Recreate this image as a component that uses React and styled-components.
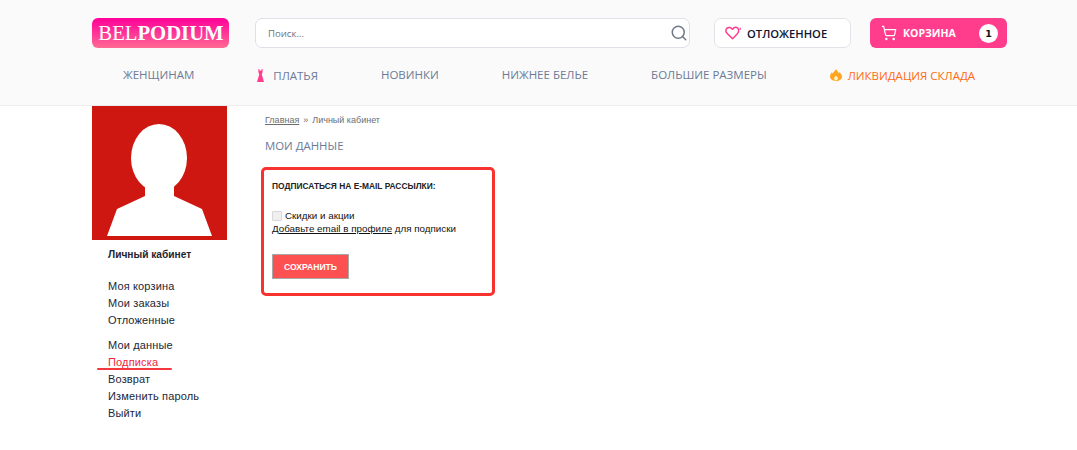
import React from "react";
import styled, { createGlobalStyle } from "styled-components";
import { Search, ShoppingCart } from "lucide-react";

const Global = createGlobalStyle`
  html, body { margin: 0; padding: 0; background: #fff; }
  * { box-sizing: border-box; }
`;

const Page = styled.div`
  width: 1077px;
  min-height: 450px;
  font-family: "Liberation Sans", Arial, sans-serif;
`;

const Header = styled.header`
  height: 106px;
  background: #fafafa;
  border-bottom: 1px solid #ececec;
  padding: 18px 70px 0 92px;
`;

const TopRow = styled.div`
  display: flex;
  align-items: center;
  height: 30px;
`;

const Logo = styled.a`
  width: 137px;
  height: 30px;
  padding-left: 1px;
  border-radius: 6px;
  background: linear-gradient(180deg, #ff0099 0%, #ff6a93 100%);
  color: #fff;
  font: 20.7px/30px "Liberation Serif", "Times New Roman", serif;
  text-align: center;
  white-space: nowrap;
  b { font-weight: 700; }
`;

const SearchBox = styled.div`
  width: 435px;
  height: 30px;
  margin-left: 26px;
  border: 1px solid #dfe0e8;
  border-radius: 7px;
  background: #fff;
  display: flex;
  align-items: center;
  justify-content: space-between;
  padding: 0 1px 0 12px;
  font: 9.6px "Open Sans", sans-serif;
  color: #6f7480;
  svg { color: #727a8a; }
`;

const Wish = styled.a`
  width: 137px;
  height: 30px;
  margin-left: 24px;
  border: 1px solid #e2e3e8;
  border-radius: 7px;
  background: #fff;
  display: flex;
  align-items: center;
  gap: 6px;
  padding-left: 10px;
  font: 600 11.2px "Open Sans", sans-serif;
  color: #0f1530;
`;

const Cart = styled.a`
  width: 137px;
  height: 30px;
  margin-left: 19px;
  border-radius: 6px;
  background: #ff3d8c;
  color: #fff;
  display: flex;
  align-items: center;
  padding: 0 9px 0 11px;
  font: 700 10.5px "Open Sans", sans-serif;
  svg { flex: none; }
`;

const CartLabel = styled.span`
  margin-left: 6px;
  flex: 1;
`;

const Badge = styled.span`
  width: 19px;
  height: 19px;
  border-radius: 50%;
  background: #fff;
  color: #111;
  font: 700 9.5px/19px "DejaVu Sans", sans-serif;
  text-align: center;
`;

const Nav = styled.nav`
  display: flex;
  gap: 63px;
  padding: 19px 0 0 31px;
`;

const NavItem = styled.a`
  display: flex;
  align-items: center;
  gap: ${(p) => (p.$hot ? 6 : 9)}px;
  height: 14px;
  white-space: nowrap;
  font: 500 11.5px "Open Sans", sans-serif;
  color: ${(p) => (p.$hot ? "#ff6a13" : "#6c7a98")};
  transform: translateY(${(p) => (p.$low ? 1 : 0)}px);
`;

const Main = styled.main`
  display: flex;
  padding-left: 92px;
`;

const Sidebar = styled.aside`
  width: 173px;
  flex: none;
`;

const Avatar = styled.svg`
  display: block;
  width: 135px;
  height: 134px;
`;

const SideTitle = styled.div`
  margin: 8px 0 0 16px;
  font: 700 10.2px/14px "Liberation Sans", Arial, sans-serif;
  color: #1f2530;
`;

const SideMenu = styled.ul`
  list-style: none;
  margin: ${(p) => p.$top}px 0 0 16px;
  padding: 0;
`;

const SideLink = styled.li`
  position: relative;
  height: 17px;
  font: 11px/17px "Liberation Sans", Arial, sans-serif;
  letter-spacing: 0.15px;
  color: ${(p) => (p.$active ? "#f0253c" : "#1c2738")};
  &::after {
    content: ${(p) => (p.$active ? '""' : "none")};
    position: absolute;
    left: -11px;
    top: 14px;
    width: 75px;
    height: 2px;
    border-radius: 1px;
    background: #f5383d;
  }
`;

const Content = styled.section`
  padding-top: 8px;
  flex: 1;
  margin-left: -4px;
`;

const Crumbs = styled.div`
  padding-left: 4px;
  font: 9px/13px "Liberation Sans", Arial, sans-serif;
  color: #6e6e6e;
  a { text-decoration: underline; }
  i { font-style: normal; margin: 0 4px; }
`;

const Title = styled.h1`
  margin: 11px 0 0;
  padding-left: 4px;
  font: 400 11.4px/16px "Open Sans", sans-serif;
  color: #6c7a98;
`;

const Panel = styled.div`
  width: 234px;
  height: 129px;
  margin-top: 13px;
  border: 3px solid #f8322f;
  border-radius: 5px;
  padding: 9px 8px;
  background: #fff;
  color: #111;
`;

const PanelTitle = styled.div`
  font: 700 8.4px/14px "Liberation Sans", Arial, sans-serif;
  color: #222;
`;

const CheckRow = styled.label`
  display: flex;
  align-items: center;
  gap: 3px;
  margin-top: 16px;
  font: 9.8px/13px "Liberation Sans", Arial, sans-serif;
`;

const Check = styled.span`
  width: 10px;
  height: 10px;
  border: 1px solid #d8d8d8;
  border-radius: 1px;
  background: #f0f0f0;
`;

const Note = styled.div`
  font: 9.8px/13px "Liberation Sans", Arial, sans-serif;
  a { text-decoration: underline; }
`;

const Save = styled.button`
  display: block;
  width: 77px;
  height: 25px;
  margin-top: 19px;
  padding: 0;
  border: 1px solid #a8a8a8;
  background: #fd5050;
  color: #fff;
  font: 700 8.6px "Liberation Sans", Arial, sans-serif;
`;

function HeartIcon() {
  return (
    <svg width="16" height="14" viewBox="0 0 16 14" fill="none" stroke="#ff3d8c" strokeWidth="1.5" strokeLinecap="round" strokeLinejoin="round">
      <path d="M7.500 12.800 2 7.300C.4 5.700.6 3.300 2.100 2.100 3.600.9 6 1.200 7.500 3.200 8.600 1.700 10.200 1.100 11.700 1.500 13.800 2.100 14.400 5 12.600 7.400Z" />
      <path d="M15.200 2v1.500" strokeWidth="1.100" />
    </svg>
  );
}

function DressIcon() {
  return (
    <svg width="7" height="13" viewBox="0 0 7 13" fill="#ff3d8c">
      <path d="M1.400 0h1v1.600h2.200V0h1v3L4.800 5.400 7 13H0L2.200 5.400 1.400 3Z" />
    </svg>
  );
}

function FlameIcon() {
  return (
    <svg width="12" height="12" viewBox="0 0 12 12" fill="#ffa51f">
      <path d="M6.300 0c.5 2 2 2.800 2.600 4.400.3-.4.4-.9.4-1.400C10.800 4.300 12 6 12 7.700 12 10.300 9.600 12 6 12S0 10.300 0 7.600c0-2 1.200-3.100 2-4.600.2.700.4 1.200.9 1.700C3.300 2.800 5 1.700 6.300 0Z" />
      <path d="M6 6.500c.9 1 1.900 1.700 1.900 3 0 1-.8 1.800-1.900 1.800s-1.900-.8-1.900-1.800c0-1.300 1.300-1.800 1.900-3Z" fill="#fff3c9" />
    </svg>
  );
}

export default function App() {
  return (
    <Page>
      <Global />
      <Header>
        <TopRow>
          <Logo>BEL<b>PODIUM</b></Logo>
          <SearchBox>
            Поиск...
            <Search size={18} strokeWidth={2} />
          </SearchBox>
          <Wish><HeartIcon />ОТЛОЖЕННОЕ</Wish>
          <Cart>
            <ShoppingCart size={16} strokeWidth={1.8} />
            <CartLabel>КОРЗИНА</CartLabel>
            <Badge>1</Badge>
          </Cart>
        </TopRow>
        <Nav>
          <NavItem>ЖЕНЩИНАМ</NavItem>
          <NavItem $low><DressIcon />ПЛАТЬЯ</NavItem>
          <NavItem>НОВИНКИ</NavItem>
          <NavItem>НИЖНЕЕ БЕЛЬЕ</NavItem>
          <NavItem>БОЛЬШИЕ РАЗМЕРЫ</NavItem>
          <NavItem $hot $low><FlameIcon />ЛИКВИДАЦИЯ СКЛАДА</NavItem>
        </Nav>
      </Header>
      <Main>
        <Sidebar>
          <Avatar viewBox="0 0 135 134">
            <rect width="135" height="134" fill="#cf1711" />
            <ellipse cx="67" cy="52" rx="28" ry="34" fill="#fff" />
            <path d="M53 76h29v14l28 13 10 27H15l10-27 28-13Z" fill="#fff" />
          </Avatar>
          <SideTitle>Личный кабинет</SideTitle>
          <SideMenu $top={16}>
            <SideLink>Моя корзина</SideLink>
            <SideLink>Мои заказы</SideLink>
            <SideLink>Отложенные</SideLink>
          </SideMenu>
          <SideMenu $top={8}>
            <SideLink>Мои данные</SideLink>
            <SideLink $active>Подписка</SideLink>
            <SideLink>Возврат</SideLink>
            <SideLink>Изменить пароль</SideLink>
            <SideLink>Выйти</SideLink>
          </SideMenu>
        </Sidebar>
        <Content>
          <Crumbs><a>Главная</a><i>»</i>Личный кабинет</Crumbs>
          <Title>МОИ ДАННЫЕ</Title>
          <Panel>
            <PanelTitle>ПОДПИСАТЬСЯ НА E-MAIL РАССЫЛКИ:</PanelTitle>
            <CheckRow><Check />Скидки и акции</CheckRow>
            <Note><a>Добавьте email в профиле</a> для подписки</Note>
            <Save>СОХРАНИТЬ</Save>
          </Panel>
        </Content>
      </Main>
    </Page>
  );
}
